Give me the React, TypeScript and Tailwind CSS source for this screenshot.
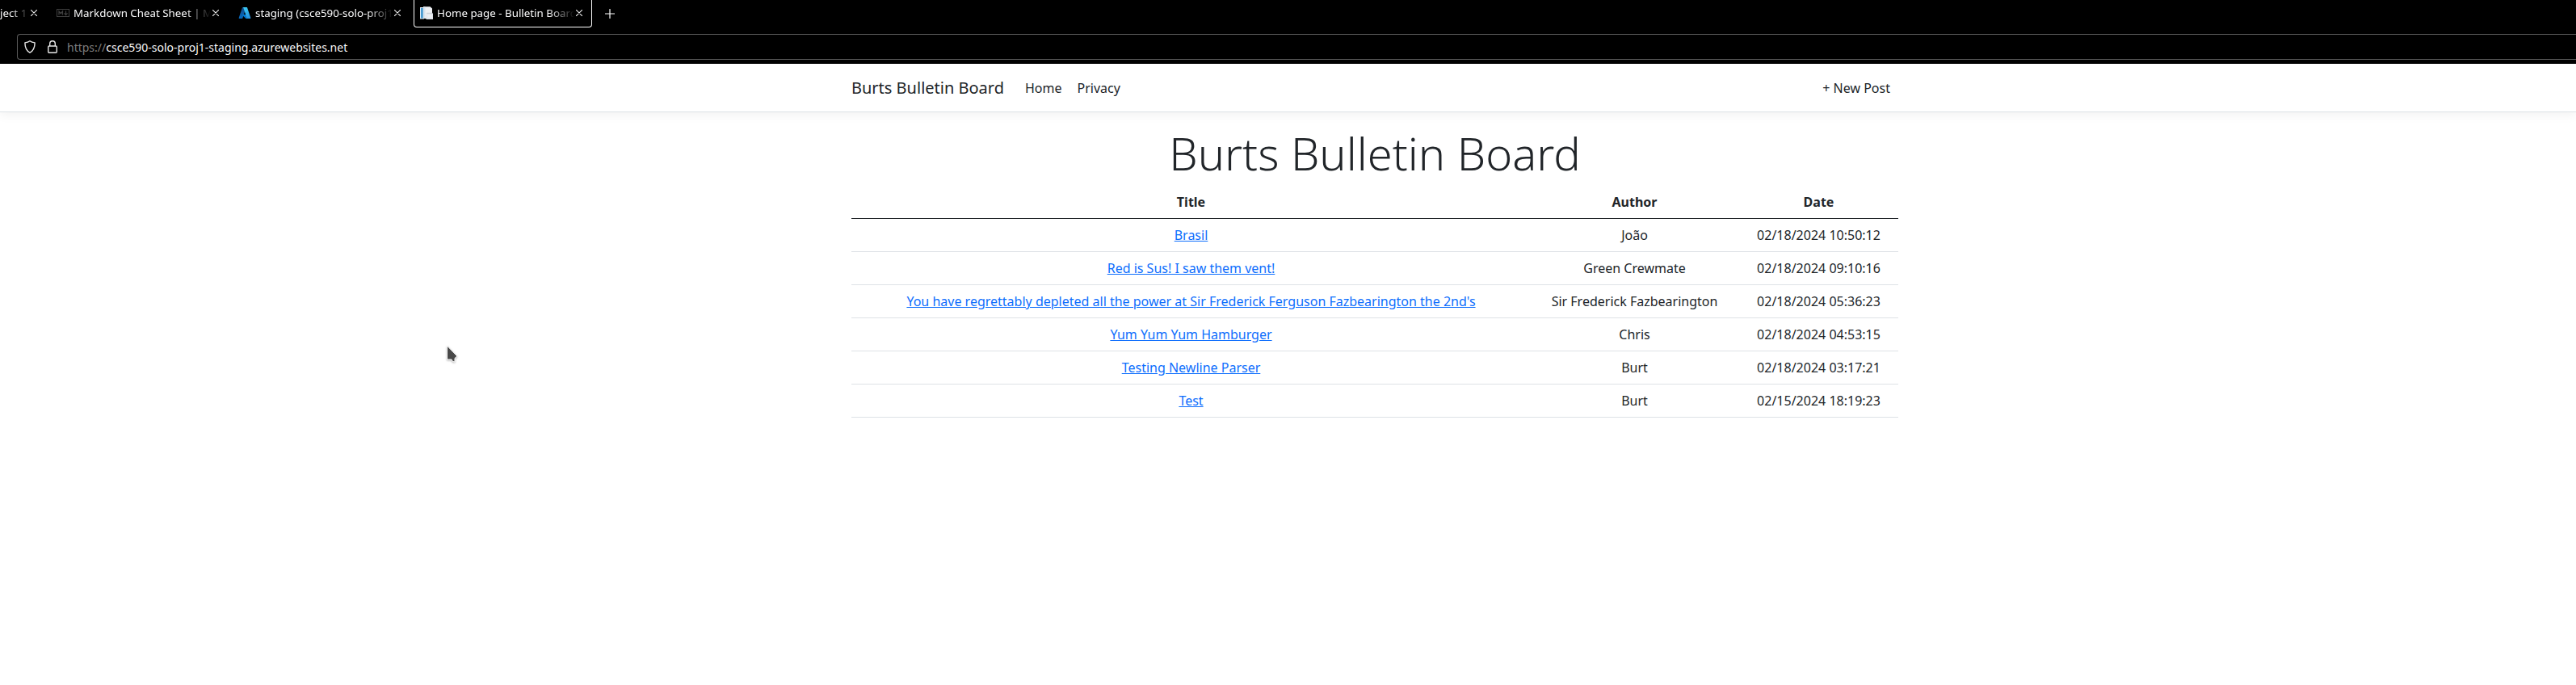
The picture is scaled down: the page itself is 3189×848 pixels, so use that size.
import type { ReactNode } from "react";

type Post = { title: string; author: string; date: string };

const posts: Post[] = [
  { title: "Brasil", author: "João", date: "02/18/2024 10:50:12" },
  { title: "Red is Sus! I saw them vent!", author: "Green Crewmate", date: "02/18/2024 09:10:16" },
  {
    title: "You have regrettably depleted all the power at Sir Frederick Ferguson Fazbearington the 2nd's",
    author: "Sir Frederick Fazbearington",
    date: "02/18/2024 05:36:23",
  },
  { title: "Yum Yum Yum Hamburger", author: "Chris", date: "02/18/2024 04:53:15" },
  { title: "Testing Newline Parser", author: "Burt", date: "02/18/2024 03:17:21" },
  { title: "Test", author: "Burt", date: "02/15/2024 18:19:23" },
];

function CloseIcon() {
  return (
    <svg width="8" height="8" viewBox="0 0 8 8" className="shrink-0" fill="none" stroke="#f2f2f2" strokeWidth="1.1" strokeLinecap="round">
      <path d="M0.4 0.4 7.6 7.6M7.6 0.4 0.4 7.6" />
    </svg>
  );
}

function MarkdownIcon() {
  return (
    <svg width="16" height="16" viewBox="0 0 16 16" fill="none" stroke="#404040" className="shrink-0">
      <rect x="0.5" y="3.5" width="15" height="9" />
      <path d="M3 10.500V6L5.250 8.700 7.500 6v4.500M11.500 5.500v4.500M9.500 8.300l2 2.200 2-2.200" strokeWidth="1.200" />
    </svg>
  );
}

function AzureIcon() {
  return (
    <svg width="16" height="16" viewBox="0 0 96 96" className="shrink-0">
      <defs>
        <linearGradient id="az-left" x1="0.6" y1="0" x2="0.3" y2="1">
          <stop offset="0" stopColor="#114a8b" />
          <stop offset="1" stopColor="#0669bc" />
        </linearGradient>
        <linearGradient id="az-right" x1="0.3" y1="0" x2="0.6" y2="1">
          <stop offset="0" stopColor="#3ccbf4" />
          <stop offset="1" stopColor="#2892df" />
        </linearGradient>
      </defs>
      <path fill="url(#az-left)" d="M33.300 6.500h26.100L32.300 86.800a4.200 4.200 0 0 1-3.900 2.800H8.100a4.200 4.200 0 0 1-3.900-5.500L29.400 9.400a4.200 4.200 0 0 1 3.900-2.900z" />
      <path fill="#0078d4" d="M71.200 60.300H29.900a1.900 1.900 0 0 0-1.300 3.300l26.500 24.800a4.200 4.200 0 0 0 2.800 1.100h23.400z" />
      <path fill="url(#az-right)" d="M66.600 9.400a4.200 4.200 0 0 0-3.900-2.900H33.600a4.200 4.200 0 0 1 3.900 2.900l25.300 74.800a4.200 4.200 0 0 1-3.900 5.500h29.100a4.200 4.200 0 0 0 3.900-5.500z" />
    </svg>
  );
}

function BoardIcon() {
  return (
    <svg width="16" height="16" viewBox="0 0 16 16" className="shrink-0">
      <path d="M0 1h5v14.500H0z" fill="#dceaf5" />
      <path d="M1 2h2.800v12.500H1z" fill="#4a9bd1" />
      <path d="M4 0.300h8.500L15 2.500V15H4z" fill="#eef0f4" />
      <path d="M4 0.300h2.500V15H4z" fill="#d8e2ec" />
      <path d="M8 8.500h8V16H7.500z" fill="#dfe3ea" />
      <path d="M9 11h6M9 13h6" stroke="#f8f9fb" strokeWidth="1" />
      <path d="M8 8.300h7.500" stroke="#b9bfca" strokeWidth="0.700" />
    </svg>
  );
}

function Tab({ icon, label, active = false }: { icon: ReactNode; label: string; active?: boolean }) {
  return (
    <div
      className={
        active
          ? "flex h-[34px] w-[221px] shrink-0 items-center rounded-b border border-t-0 border-white pr-[11px] pb-px pl-[7px]"
          : "flex h-[34px] w-[221px] shrink-0 items-center pr-3 pb-0.5 pl-2"
      }
    >
      {icon}
      <span className="ml-[5px] w-[170px] shrink-0 overflow-hidden whitespace-nowrap [mask-image:linear-gradient(to_left,transparent,black_32px)]">
        {label}
      </span>
      <span className="ml-0.5 flex">
        <CloseIcon />
      </span>
    </div>
  );
}

function BrowserChrome() {
  return (
    <div className="h-[79px] bg-black text-[13.333px] leading-[18px] text-[#f9f9fa]">
      <div className="flex h-[34px] items-start gap-1">
        <div className="flex h-[34px] w-[58px] shrink-0 items-center pr-3 pb-0.5">
          <span className="flex w-9 justify-start overflow-hidden whitespace-nowrap [mask-image:linear-gradient(to_left,transparent,black_22px)]">
            ject 1
          </span>
          <span className="ml-0.5 flex">
            <CloseIcon />
          </span>
        </div>
        <Tab icon={<MarkdownIcon />} label="Markdown Cheat Sheet | M" />
        <Tab icon={<AzureIcon />} label="staging (csce590-solo-proj1" />
        <Tab icon={<BoardIcon />} label="Home page - Bulletin Board" active />
        <svg width="12" height="12" viewBox="0 0 12 12" className="mt-[11px] ml-3 shrink-0" stroke="#fff" strokeWidth="1.200" strokeLinecap="round">
          <path d="M6 0.500v11M0.500 6h11" />
        </svg>
      </div>
      <div className="mt-2 ml-[21px] flex h-8 items-center rounded-l border border-r-0 border-[#5b5b5b] pl-2">
        <svg width="16" height="16" viewBox="0 0 16 16" fill="none" stroke="#e8e8e8" strokeWidth="1.400" strokeLinejoin="round">
          <path d="M7 0.800C5.300 2 3.200 2.600 0.900 2.900c0 4.800 1.300 9.600 6.100 12.300 4.800-2.700 6.100-7.500 6.100-12.300C10.800 2.600 8.700 2 7 0.800z" />
        </svg>
        <svg width="12" height="16" viewBox="0 0 12 16" className="ml-[13px]" fill="none" stroke="#e8e8e8" strokeWidth="1.400">
          <rect x="0.700" y="7" width="10.600" height="8.300" rx="1.300" />
          <path d="M2.700 7V4a3.300 3.300 0 0 1 6.600 0v3" />
        </svg>
        <span className="ml-3 pt-0.5 text-sm whitespace-nowrap">
          <span className="text-[#7c7c7c]">https://</span>csce590-solo-proj1-staging.azurewebsites.net
        </span>
      </div>
    </div>
  );
}

export default function App() {
  return (
    <div className="relative h-[848px] w-full overflow-hidden bg-white font-['Noto_Sans',sans-serif] text-base text-[#212529]">
      <BrowserChrome />
      <header className="h-[60px] border-b border-[#dee2e6] shadow-[0_4px_12px_rgba(0,0,0,0.05)]">
        <nav className="ml-[1054px] flex h-[59px] w-[1296px] items-center pr-[10px]">
          <a className="text-xl">Burts Bulletin Board</a>
          <a className="ml-[26px]">Home</a>
          <a className="ml-[19px]">Privacy</a>
          <a className="ml-auto">+ New Post</a>
        </nav>
      </header>
      <main className="mt-[17px] ml-[1054px] w-[1296px] text-center">
        <h1 className="mb-[7px] text-[56px] leading-[67px] font-light">Burts Bulletin Board</h1>
        <table className="w-full table-fixed border-separate border-spacing-0">
          <colgroup>
            <col className="w-[841px]" />
            <col className="w-[257px]" />
            <col className="w-[198px]" />
          </colgroup>
          <thead>
            <tr>
              <th className="border-b border-[#212529] py-2">Title</th>
              <th className="border-b border-[#212529] py-2">Author</th>
              <th className="border-b border-[#212529] py-2 pl-px">Date</th>
            </tr>
          </thead>
          <tbody>
            {posts.map((post) => (
              <tr key={post.date}>
                <td className="border-b border-[#dee2e6] py-2">
                  <a className="text-[#0d6efd] underline">{post.title}</a>
                </td>
                <td className="border-b border-[#dee2e6] py-2">{post.author}</td>
                <td className="border-b border-[#dee2e6] py-2 pl-px">{post.date}</td>
              </tr>
            ))}
          </tbody>
        </table>
      </main>
      <svg width="18" height="26" viewBox="0 0 18 26" className="absolute top-[426px] left-[552px] drop-shadow-[0_1px_1px_rgba(0,0,0,0.3)]">
        <path d="M1.500 2v17h5.500l1.500 2.500 2.500 0.500V17.500l3-2.500z" fill="#484848" stroke="#fff" strokeWidth="1" />
      </svg>
    </div>
  );
}
